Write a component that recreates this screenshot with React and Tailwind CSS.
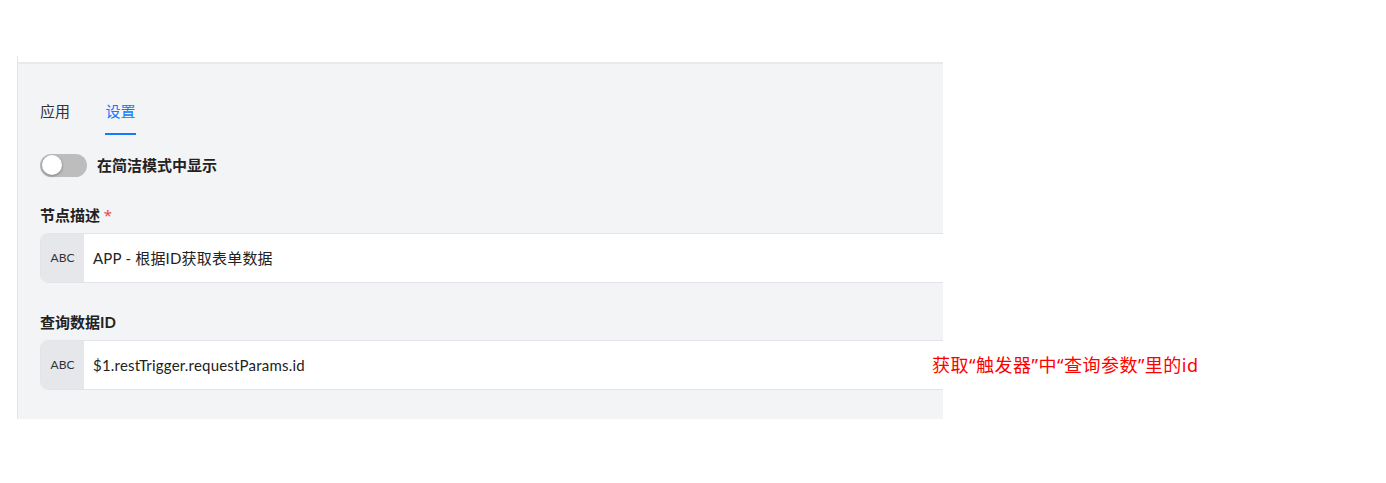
export default function App() {
  const font = { fontFamily: 'Lato, "Noto Sans CJK SC", sans-serif' };
  return (
    <div className="w-[1386px] h-[483px] bg-white relative" style={font}>
      <div className="pt-[56px] pl-[17px] w-[943px]">
        <div className="border-l border-[#e3e5e8] pt-[6px] h-[363px]">
          <div className="border-t-2 border-[#e8e9eb] bg-[#f3f4f6] h-[357px] overflow-hidden pl-[22px]">
            <div className="flex gap-[35px] pt-[36px] text-[15px]">
              <div className="text-[#333] h-[36px] leading-[22px]">应用</div>
              <div className="text-[#1677ff] h-[36px] leading-[22px] flex flex-col items-center">
                <span>设置</span>
                <span className="mt-[11px] h-[2px] w-[31px] bg-[#1677ff]"></span>
              </div>
            </div>
            <div className="flex items-center gap-[10px] mt-[17px] h-[24px]">
              <div className="w-[47px] h-[23px] rounded-full bg-[#bdbdbd] flex items-center pl-[2px]">
                <div className="w-[20px] h-[20px] rounded-full bg-white shadow-[0_1px_3px_rgba(0,0,0,0.35)]"></div>
              </div>
              <span className="text-[15px] font-bold text-[#222]">在简洁模式中显示</span>
            </div>
            <div className="mt-[27px] text-[15px] font-bold text-[#222] leading-[22px]">
              节点描述 <span className="text-[#e5484d] font-normal" style={{ fontFamily: '"Noto Sans", sans-serif' }}>*</span>
            </div>
            <div className="mt-[7px] flex w-[1000px] h-[50px] rounded-l-[8px] border border-[#e2e4e7] bg-white overflow-hidden">
              <div className="w-[43px] bg-[#e5e7eb] flex items-center justify-center text-[12px] text-[#333]">ABC</div>
              <div className="flex items-center pl-[9px] text-[15px] text-[#222] tracking-[0.2px]">APP - 根据ID获取表单数据</div>
            </div>
            <div className="mt-[28px] text-[15px] font-bold text-[#222] leading-[22px]">查询数据ID</div>
            <div className="mt-[7px] flex w-[1000px] h-[50px] rounded-l-[8px] border border-[#e2e4e7] bg-white overflow-hidden">
              <div className="w-[43px] bg-[#e5e7eb] flex items-center justify-center text-[12px] text-[#333]">ABC</div>
              <div className="flex items-center pl-[9px] text-[15px] text-[#222] tracking-[0.2px]">$1.restTrigger.requestParams.id</div>
            </div>
          </div>
        </div>
      </div>
      <div className="absolute left-[932px] top-[352px] text-[18px] text-[#ff0000] leading-[26px] whitespace-nowrap tracking-[0.5px]" style={{ fontFamily: '"Noto Sans", "Noto Sans CJK SC", sans-serif' }}>
        获取“触发器”中“查询参数”里的id
      </div>
    </div>
  );
}
